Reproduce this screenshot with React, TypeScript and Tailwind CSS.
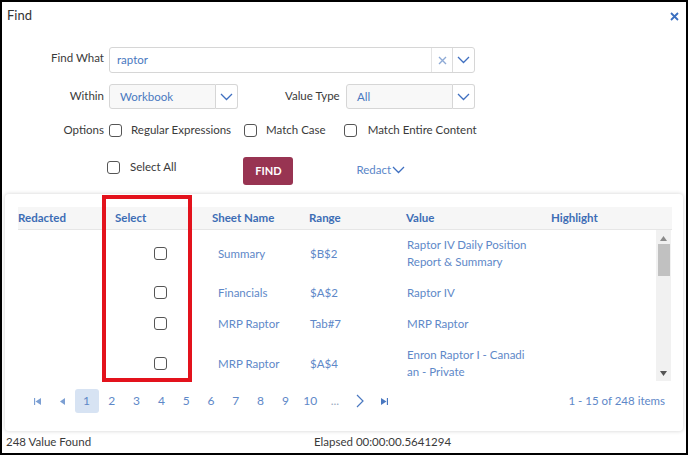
import React from 'react';

function Chevron({ className = '' }: { className?: string }) {
  return (
    <svg width="13" height="8" viewBox="0 0 13 8" className={className}>
      <path d="M1 1 L6.5 6.5 L12 1" fill="none" stroke="#3f6fc0" strokeWidth="1.3" />
    </svg>
  );
}

function Box() {
  return <span className="inline-block w-[13px] h-[13px] border-[1.5px] border-[#555] rounded-[3px] bg-white shrink-0" />;
}

const rows = [
  { sheet: 'Summary', range: '$B$2', value: ['Raptor IV Daily Position', 'Report & Summary'] },
  { sheet: 'Financials', range: '$A$2', value: ['Raptor IV'] },
  { sheet: 'MRP Raptor', range: 'Tab#7', value: ['MRP Raptor'] },
  { sheet: 'MRP Raptor', range: '$A$4', value: ['Enron Raptor I - Canadi', 'an - Private'] },
];

export default function App() {
  return (
    <div className="relative w-[688px] h-[455px] border-2 border-black bg-white overflow-hidden flex flex-col font-['Lato',sans-serif] text-[11.5px] text-[#3a3a3a]">
      {/* title */}
      <div className="h-[28px] flex items-center justify-between pl-[5px] pr-[7px]">
        <span className="text-[13px] text-[#333]">Find</span>
        <svg width="9" height="9" viewBox="0 0 9 9">
          <path d="M1 1 L8 8 M8 1 L1 8" stroke="#3a6fc0" strokeWidth="1.8" />
        </svg>
      </div>

      {/* find what */}
      <div className="mt-[17px] h-[26px] flex items-center">
        <span className="w-[102px] text-right mb-[4px]">Find What</span>
        <div className="ml-[5px] w-[366px] h-[26px] flex border border-[#d6d6d6] rounded-[3px]">
          <div className="flex-1 flex items-center pl-[7px] text-[#4a78c0]">raptor</div>
          <div className="w-[21px] flex items-center justify-center border-l border-[#e4e4e4]">
            <svg width="9" height="9" viewBox="0 0 9 9">
              <path d="M1 1 L8 8 M8 1 L1 8" stroke="#8eaad6" strokeWidth="1.4" />
            </svg>
          </div>
          <div className="w-[22px] flex items-center justify-center border-l border-[#dcdcdc]">
            <Chevron />
          </div>
        </div>
      </div>

      {/* within / value type */}
      <div className="mt-[11px] h-[25px] flex items-center">
        <span className="w-[102px] text-right mb-[2px]">Within</span>
        <div className="ml-[5px] w-[129px] h-[25px] flex">
          <div className="flex-1 flex items-center pl-[10px] bg-[#f8f8f8] border border-[#d6d6d6] rounded-l-[3px] text-[#4a78c0]">Workbook</div>
          <div className="w-[22px] flex items-center justify-center border border-l-0 border-[#d6d6d6] rounded-r-[3px] bg-white">
            <Chevron />
          </div>
        </div>
        <span className="ml-[47px] w-[56px] mb-[2px]">Value Type</span>
        <div className="ml-[5px] w-[129px] h-[25px] flex">
          <div className="flex-1 flex items-center pl-[10px] bg-[#f8f8f8] border border-[#d6d6d6] rounded-l-[3px] text-[#4a78c0]">All</div>
          <div className="w-[22px] flex items-center justify-center border border-l-0 border-[#d6d6d6] rounded-r-[3px] bg-white">
            <Chevron />
          </div>
        </div>
      </div>

      {/* options */}
      <div className="mt-[12px] h-[18px] flex items-center">
        <span className="w-[102px] text-right">Options</span>
        <span className="ml-[5px] flex"><Box /></span>
        <span className="ml-[9px]">Regular Expressions</span>
        <span className="ml-[13px] flex"><Box /></span>
        <span className="ml-[9px]">Match Case</span>
        <span className="ml-[18px] flex"><Box /></span>
        <span className="ml-[11px]">Match Entire Content</span>
      </div>

      {/* select all / find / redact */}
      <div className="mt-[18px] h-[28px] flex items-center">
        <div className="ml-[105px] mb-[8px] flex items-center">
          <Box />
          <span className="ml-[10px]">Select All</span>
        </div>
        <button className="ml-[67px] w-[50px] h-[28px] rounded-[3px] bg-[#983452] text-white font-bold text-[11px]">FIND</button>
        <div className="ml-[63px] flex items-center gap-[1px] text-[#5a86c8] mb-[2px]">
          <span>Redact</span>
          <Chevron />
        </div>
      </div>

      {/* grid panel */}
      <div className="mt-[9px] mx-[3px] h-[237px] rounded-[4px] shadow-[0_0_4px_rgba(0,0,0,0.18)] flex flex-col pt-[13px] pl-[13px] pr-[11px]">
        <div className="h-[23px] flex items-center bg-[#f6f6f6] border-b border-[#e6e6e6] font-bold text-[#3d6db5]">
          <span className="w-[97px]">Redacted</span>
          <span className="w-[97px]">Select</span>
          <span className="w-[97px]">Sheet Name</span>
          <span className="w-[97px]">Range</span>
          <span className="w-[145px]">Value</span>
          <span>Highlight</span>
        </div>
        <div className="h-[151px] flex overflow-hidden">
          <div className="flex-1 -mt-[1px] text-[#5e88c8] leading-[17px]">
            {rows.map((r, i) => (
              <div key={i} className="flex items-center py-[7px]">
                <span className="w-[97px]" />
                <span className="w-[97px] pl-[39px] flex"><Box /></span>
                <span className="w-[97px] pl-[6px]">{r.sheet}</span>
                <span className="w-[97px] pl-[1px]">{r.range}</span>
                <span className="w-[145px] pl-[1px]">
                  {r.value.map((v, j) => (
                    <div key={j}>{v}</div>
                  ))}
                </span>
              </div>
            ))}
          </div>
          <div className="w-[15px] mr-[1px] bg-[#f1f1f1] flex flex-col items-center">
            <svg width="7" height="5" viewBox="0 0 7 5" className="mt-[6px]">
              <path d="M0 5 L3.5 0 L7 5 Z" fill="#8a8a8a" />
            </svg>
            <div className="mt-[3px] w-[12px] h-[32px] bg-[#c1c1c1]" />
            <div className="flex-1" />
            <svg width="7" height="5" viewBox="0 0 7 5" className="mb-[5px]">
              <path d="M0 0 L3.5 5 L7 0 Z" fill="#555" />
            </svg>
          </div>
        </div>
        {/* pager */}
        <div className="h-[40px] flex items-center text-[#5e88c8] text-[12px]">
          <div className="ml-[7px] flex items-center">
            <span className="w-[24.8px] flex justify-center">
              <svg width="7" height="7" viewBox="0 0 7 7">
                <path d="M0.5 0 V7" stroke="#7c9fd3" strokeWidth="1.3" />
                <path d="M7 0 L1.5 3.5 L7 7 Z" fill="#7c9fd3" />
              </svg>
            </span>
            <span className="w-[24.8px] flex justify-center">
              <svg width="5" height="7" viewBox="0 0 5 7">
                <path d="M5 0 L0 3.5 L5 7 Z" fill="#7c9fd3" />
              </svg>
            </span>
            <span className="w-[24px] h-[24px] mr-[0.8px] rounded-[3px] bg-[#d7e3f3] flex items-center justify-center">1</span>
            {['2', '3', '4', '5', '6', '7', '8', '9', '10'].map((n) => (
              <span key={n} className="w-[24.8px] text-center">{n}</span>
            ))}
            <span className="w-[24.8px] text-center text-[#9aa9c0]">...</span>
            <span className="w-[24.8px] flex justify-center">
              <svg width="8" height="14" viewBox="0 0 8 14">
                <path d="M1 1 L7 7 L1 13" fill="none" stroke="#4a78c0" strokeWidth="1.2" />
              </svg>
            </span>
            <span className="w-[24.8px] flex justify-center">
              <svg width="7" height="7" viewBox="0 0 7 7">
                <path d="M0 0 L5.5 3.5 L0 7 Z" fill="#4a78c0" />
                <path d="M6.5 0 V7" stroke="#4a78c0" strokeWidth="1.3" />
              </svg>
            </span>
          </div>
          <span className="ml-auto mr-[7px] text-[11.5px]">1 - 15 of 248 items</span>
        </div>
      </div>

      {/* footer */}
      <div className="flex-1 flex items-center">
        <span className="w-[312px] pl-[4px]">248 Value Found</span>
        <span>Elapsed 00:00:00.5641294</span>
      </div>

      {/* highlight overlay */}
      <div className="absolute left-[100px] top-[193px] w-[90px] h-[187px] border-[4px] border-[#e3121c] pointer-events-none" />
    </div>
  );
}
